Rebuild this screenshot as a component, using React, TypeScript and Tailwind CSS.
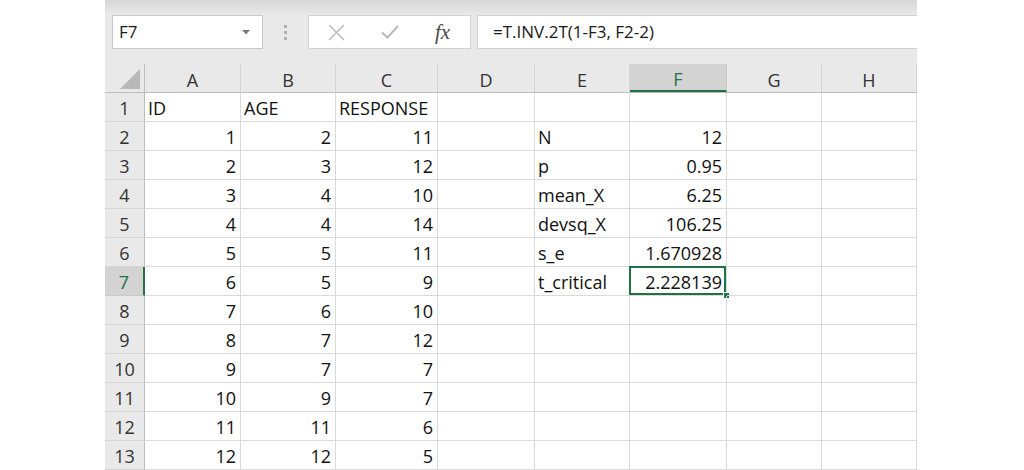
import React from "react"

const cols = ["A", "B", "C", "D", "E", "F", "G", "H"]
const widths = ["w-[96px]", "w-[95px]", "w-[102px]", "w-[97px]", "w-[95px]", "w-[97px]", "w-[95px]", "w-[95px]"]

type Cell = { v: string; num?: boolean }

const ages = ["2", "3", "4", "4", "5", "5", "6", "7", "7", "9", "11", "12"]
const resp = ["11", "12", "10", "14", "11", "9", "10", "12", "7", "7", "6", "5"]
const stats: [string, string][] = [
  ["N", "12"],
  ["p", "0.95"],
  ["mean_X", "6.25"],
  ["devsq_X", "106.25"],
  ["s_e", "1.670928"],
  ["t_critical", "2.228139"],
]

function buildRows(): Cell[][] {
  const rows: Cell[][] = []
  rows.push([{ v: "ID" }, { v: "AGE" }, { v: "RESPONSE" }, { v: "" }, { v: "" }, { v: "" }, { v: "" }, { v: "" }])
  for (let i = 0; i < 12; i++) {
    const s = stats[i]
    rows.push([
      { v: String(i + 1), num: true },
      { v: ages[i], num: true },
      { v: resp[i], num: true },
      { v: "" },
      { v: s ? s[0] : "" },
      { v: s ? s[1] : "", num: true },
      { v: "" },
      { v: "" },
    ])
  }
  return rows
}

function Toolbar() {
  return (
    <div className="h-[64px] bg-[#e9e9e9] flex flex-col">
      <div className="h-[15px] bg-gradient-to-b from-[#d6d6d6] to-[#e9e9e9]" />
      <div className="h-[34px] flex items-stretch pl-[7px]">
        {/* Name box */}
        <div className="w-[151px] bg-white border border-[#c8c8c8] flex items-center justify-between pl-[6px] pr-[12px]">
          <span className="text-[17px] text-[#1a1a1a]">F7</span>
          <svg width="8" height="5" viewBox="0 0 8 5">
            <path d="M0 0 L8 0 L4 4.5 Z" fill="#777" />
          </svg>
        </div>
        {/* dots */}
        <div className="w-[45px] flex flex-col items-center justify-center gap-[3px]">
          <div className="w-[3px] h-[3px] bg-[#b0b0b0]" />
          <div className="w-[3px] h-[3px] bg-[#b0b0b0]" />
          <div className="w-[3px] h-[3px] bg-[#b0b0b0]" />
        </div>
        {/* formula buttons */}
        <div className="w-[163px] bg-white border border-[#d2d2d2] flex items-center">
          <div className="w-[54px] flex justify-center">
            <svg width="17" height="17" viewBox="0 0 16 16">
              <path d="M1 1 L15 15 M15 1 L1 15" stroke="#b8b8b8" strokeWidth="1.3" fill="none" />
            </svg>
          </div>
          <div className="w-[54px] flex justify-center">
            <svg width="18" height="14" viewBox="0 0 18 14">
              <path d="M1 7.5 L6.5 12.5 L17 1" stroke="#b8b8b8" strokeWidth="2" fill="none" />
            </svg>
          </div>
          <div className="flex-1 flex justify-center pr-[2px]">
            <span className="text-[21px] italic text-[#4a4a4a] font-['Liberation_Serif',serif] leading-none">
              fx
            </span>
          </div>
        </div>
        <div className="w-[6px]" />
        {/* formula */}
        <div className="flex-1 bg-white border border-[#d2d2d2] border-r-0 flex items-center pl-[15px]">
          <span className="text-[17px] text-[#1a1a1a]">=T.INV.2T(1-F3, F2-2)</span>
        </div>
      </div>
      <div className="flex-1" />
    </div>
  )
}

export default function App() {
  const rows = buildRows()
  return (
    <div className="w-[1024px] h-[470px] bg-white overflow-hidden font-['Open_Sans',sans-serif]">
      <div className="ml-[105px] w-[812px] flex flex-col">
        <Toolbar />
        {/* Column headers */}
        <div className="flex h-[29px] bg-[#e9e9e9] border-b border-[#bdbdbd]">
          <div className="w-[40px] border-r border-[#bdbdbd] flex items-end justify-end pr-[4px] pb-[3px]">
            <svg width="20" height="20" viewBox="0 0 20 20">
              <path d="M20 0 L20 20 L0 20 Z" fill="#b8b8b8" />
            </svg>
          </div>
          {cols.map((c, i) => (
            <div
              key={c}
              className={`${widths[i]} flex items-center justify-center pt-[4px] text-[18px] border-r ${
                c === "F"
                  ? "bg-[#d3d3d3] text-[#217346] border-b-2 border-b-[#217346] border-r-[#c8c8c8]"
                  : "text-[#333] border-[#d4d4d4]"
              }`}
            >
              {c}
            </div>
          ))}
        </div>
        {/* Rows */}
        {rows.map((r, ri) => (
          <div key={ri} className="flex h-[29px]">
            <div
              className={`w-[40px] flex items-center justify-center pt-[2px] text-[18px] border-b ${
                ri === 6
                  ? "bg-[#d3d3d3] text-[#217346] border-r-2 border-r-[#217346] border-b-[#c8c8c8]"
                  : "bg-[#e9e9e9] text-[#333] border-r border-r-[#bdbdbd] border-b-[#d4d4d4]"
              }`}
            >
              {ri + 1}
            </div>
            {r.map((cell, ci) => {
              const sel = ri === 6 && ci === 5
              return (
                <div
                  key={ci}
                  className={`${widths[ci]} relative flex items-center pt-[2px] text-[18px] text-[#111] border-r border-b border-[#dadada] ${
                    cell.num ? "justify-end pr-[4px]" : "justify-start pl-[3px]"
                  }`}
                >
                  {cell.v}
                  {sel && (
                    <>
                      <div className="absolute -left-[1px] -top-[1px] right-0 bottom-0 border-2 border-[#217346] pointer-events-none" />
                      <div className="absolute -right-[4px] -bottom-[4px] w-[7px] h-[7px] bg-[#217346] border border-white" />
                    </>
                  )}
                </div>
              )
            })}
          </div>
        ))}
      </div>
    </div>
  )
}
